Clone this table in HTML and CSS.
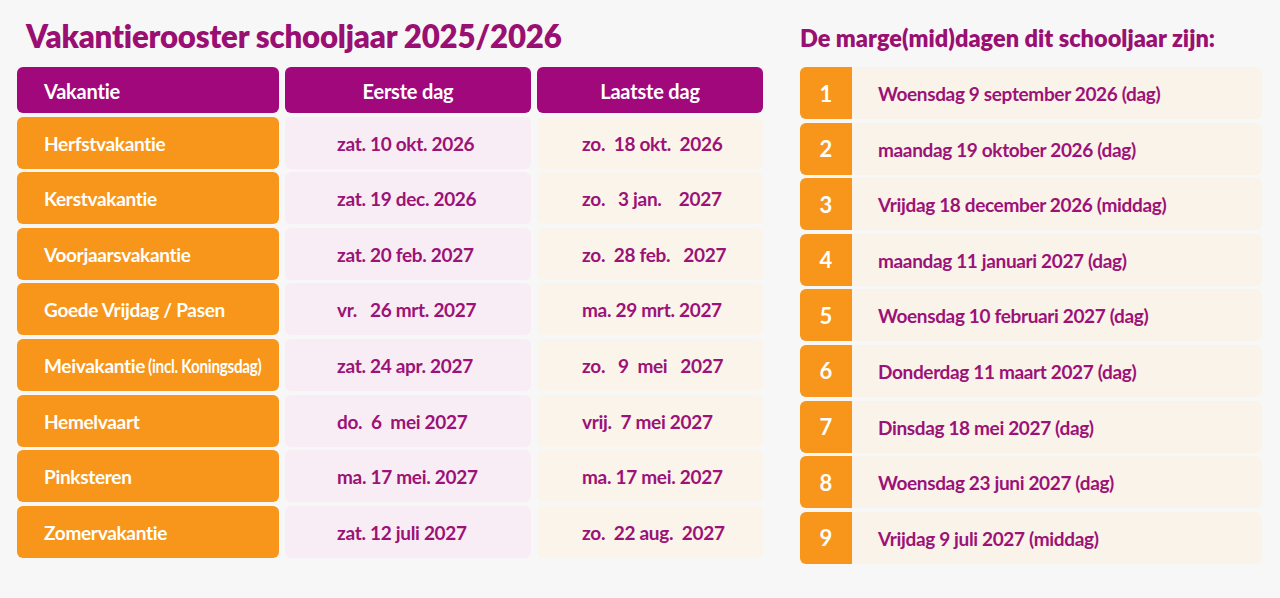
FILE: index.html
```html
<!DOCTYPE html>
<html lang="nl">
<head>
<meta charset="utf-8">
<title>Vakantierooster</title>
<link rel="stylesheet" href="styles.css">
</head>
<body>
<div class="page">
  <section class="left">
    <h1 class="title">Vakantierooster schooljaar 2025/2026</h1>
    <div class="table">
      <div class="cell head first">Vakantie</div>
      <div class="cell head center">Eerste dag</div>
      <div class="cell head center">Laatste dag</div>

      <div class="cell name">Herfstvakantie</div>
      <div class="cell d1">zat. 10 okt. 2026</div>
      <div class="cell d2">zo.  18 okt.  2026</div>

      <div class="cell name">Kerstvakantie</div>
      <div class="cell d1">zat. 19 dec. 2026</div>
      <div class="cell d2">zo.   3 jan.    2027</div>

      <div class="cell name">Voorjaarsvakantie</div>
      <div class="cell d1">zat. 20 feb. 2027</div>
      <div class="cell d2">zo.  28 feb.   2027</div>

      <div class="cell name">Goede Vrijdag / Pasen</div>
      <div class="cell d1">vr.   26 mrt. 2027</div>
      <div class="cell d2">ma. 29 mrt. 2027</div>

      <div class="cell name">Meivakantie <span class="cond">(incl. Koningsdag)</span></div>
      <div class="cell d1">zat. 24 apr. 2027</div>
      <div class="cell d2">zo.   9  mei   2027</div>

      <div class="cell name">Hemelvaart</div>
      <div class="cell d1">do.  6  mei 2027</div>
      <div class="cell d2">vrij.  7 mei 2027</div>

      <div class="cell name">Pinksteren</div>
      <div class="cell d1">ma. 17 mei. 2027</div>
      <div class="cell d2">ma. 17 mei. 2027</div>

      <div class="cell name">Zomervakantie</div>
      <div class="cell d1">zat. 12 juli 2027</div>
      <div class="cell d2">zo.  22 aug.  2027</div>
    </div>
  </section>
  <section class="right">
    <h2 class="subtitle">De marge(mid)dagen dit schooljaar zijn:</h2>
    <ol class="list">
      <li class="item"><span class="num">1</span><span class="txt">Woensdag 9 september 2026 (dag)</span></li>
      <li class="item"><span class="num">2</span><span class="txt">maandag 19 oktober 2026 (dag)</span></li>
      <li class="item"><span class="num">3</span><span class="txt">Vrijdag 18 december 2026 (middag)</span></li>
      <li class="item"><span class="num">4</span><span class="txt">maandag 11 januari 2027 (dag)</span></li>
      <li class="item"><span class="num">5</span><span class="txt">Woensdag 10 februari 2027 (dag)</span></li>
      <li class="item"><span class="num">6</span><span class="txt">Donderdag 11 maart 2027 (dag)</span></li>
      <li class="item"><span class="num">7</span><span class="txt">Dinsdag 18 mei 2027 (dag)</span></li>
      <li class="item"><span class="num">8</span><span class="txt">Woensdag 23 juni 2027 (dag)</span></li>
      <li class="item"><span class="num">9</span><span class="txt">Vrijdag 9 juli 2027 (middag)</span></li>
    </ol>
  </section>
</div>
</body>
</html>
```
FILE: styles.css
```css
* { box-sizing: border-box; }
html, body { margin: 0; padding: 0; }
body {
  background: #f8f7f7;
  font-family: Lato, "Noto Sans", sans-serif;
  width: 1280px;
  height: 598px;
  overflow: hidden;
}
.page {
  display: flex;
  padding: 0 0 0 17px;
}
.left {
  width: 746px;
}
.title {
  margin: 0 0 0 9px;
  height: 67px;
  padding-top: 16px;
  font-size: 31.2px;
  font-weight: 800;
  color: #9a0f72;
  letter-spacing: -0.2px;
  line-height: 40px;
}
.table {
  display: grid;
  grid-template-columns: 262px 246px 226px;
  grid-template-rows: 46px repeat(8, 52px);
  column-gap: 6px;
  row-gap: 3.6px;
}
.cell {
  border-radius: 6px;
  display: flex;
  align-items: center;
  padding-top: 1px;
  font-size: 19px;
  letter-spacing: -0.3px;
  font-weight: 700;
  white-space: pre;
}
.head {
  background: #a1087c;
  color: #ffffff;
  font-size: 20px;
  letter-spacing: -0.2px;
}
.head.first { padding-left: 27px; }
.head.center { justify-content: center; }
.name {
  background: #f7961a;
  color: #ffffff;
  padding-left: 27px;
}
.cond {
  display: inline-block;
  font-size: 19px;
  letter-spacing: -0.3px;
  transform: scaleX(0.8);
  transform-origin: left center;
  margin-left: -2px;
}
.d1 {
  background: #f8edf4;
  color: #9c1277;
  padding-left: 52px;
}
.d2 {
  background: #faf4ea;
  color: #9c1277;
  padding-left: 45px;
}
.right {
  margin-left: 37px;
  width: 462px;
}
.subtitle {
  margin: 0;
  height: 67px;
  padding-top: 21px;
  font-size: 23.5px;
  font-weight: 800;
  color: #9a0f72;
  line-height: 34px;
}
.list {
  list-style: none;
  margin: 0;
  padding: 0;
  display: flex;
  flex-direction: column;
  gap: 3.6px;
}
.item {
  display: flex;
  align-items: center;
  height: 52px;
  background: #faf3ea;
  border-radius: 6px;
  overflow: hidden;
}
.num {
  width: 52px;
  height: 100%;
  background: #f7961a;
  color: #ffffff;
  display: flex;
  align-items: center;
  justify-content: center;
  font-size: 22px;
  font-weight: 700;
}
.txt {
  padding-left: 26px;
  padding-top: 1px;
  font-size: 19px;
  letter-spacing: -0.35px;
  font-weight: 700;
  color: #9c1277;
}
```
